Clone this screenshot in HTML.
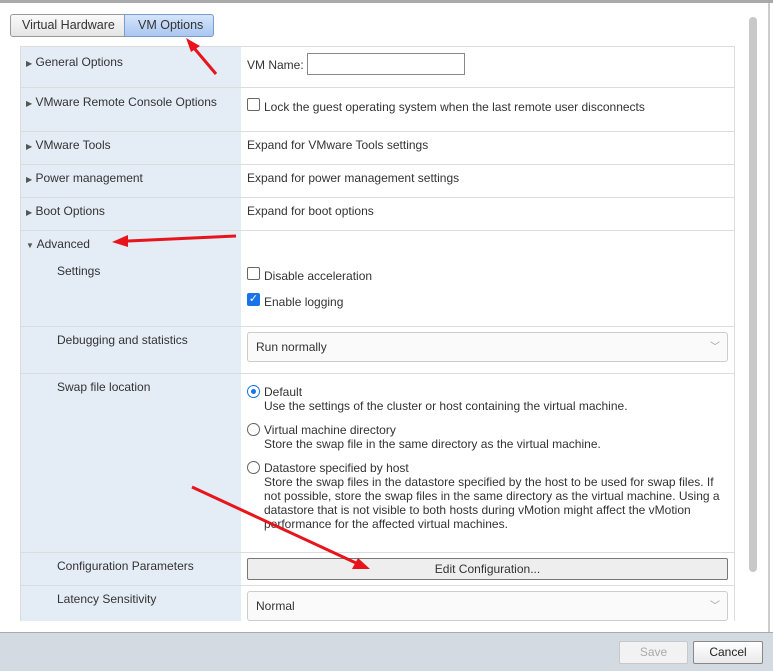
<!DOCTYPE html><html><head><style>
body{margin:0;width:773px;height:670px;position:relative;overflow:hidden;background:#fff;font-family:"Liberation Sans",sans-serif;font-size:12px;color:#333}
.a{position:absolute}
.t{position:absolute;white-space:nowrap}
.hl{position:absolute;left:20px;width:715px;height:1px;background:#dcdcdc}
.cb{position:absolute;width:11px;height:11px;border:1px solid #666;border-radius:2px;background:#fff}
.rd{position:absolute;width:11px;height:11px;border:1px solid #666;border-radius:50%;background:#fff}
.sel{position:absolute;left:247px;width:479px;height:28px;border:1px solid #ccc;border-radius:3px;background:#fafafa}
.tri{font-size:8px;color:#555}
</style></head><body>
<div class="a" style="left:0;top:0;width:773px;height:3px;background:#aaa"></div>
<div class="a" style="left:768px;top:3px;width:2px;height:630px;background:#ccc"></div>
<div class="a" style="left:749px;top:17px;width:8px;height:555px;background:#c8c8c8;border-radius:4px"></div>
<!-- tabs -->
<div class="a" style="left:10px;top:14px;width:114px;height:21px;border:1px solid #999;border-radius:3px 0 0 3px;background:linear-gradient(#fafafa,#e4e4e4)"></div>
<div class="t" style="left:22px;top:18px;font-size:12.5px">Virtual Hardware</div>
<div class="a" style="left:124px;top:14px;width:88px;height:21px;border:1px solid #7a9ccc;border-radius:0 3px 3px 0;background:linear-gradient(#d5e5fb,#a9c7f0)"></div>
<div class="t" style="left:138px;top:18px;font-size:12.5px">VM Options</div>
<!-- table -->
<div class="a" style="left:20px;top:46px;width:221px;height:575px;background:#e4ecf5"></div>
<div class="a" style="left:20px;top:46px;width:1px;height:575px;background:#ddd"></div>
<div class="a" style="left:734px;top:46px;width:1px;height:575px;background:#ddd"></div>
<div class="hl" style="top:46px"></div><div class="hl" style="top:87px"></div><div class="hl" style="top:131px"></div><div class="hl" style="top:164px"></div><div class="hl" style="top:197px"></div><div class="hl" style="top:230px"></div><div class="hl" style="top:326px;left:20px"></div><div class="hl" style="top:373px"></div><div class="hl" style="top:552px"></div><div class="hl" style="top:585px"></div>
<div class="t" style="left:26px;top:55px"><span class="tri">▶</span> General Options</div>
<div class="t" style="left:26px;top:95px"><span class="tri">▶</span> VMware Remote Console Options</div>
<div class="t" style="left:26px;top:138px"><span class="tri">▶</span> VMware Tools</div>
<div class="t" style="left:26px;top:171px"><span class="tri">▶</span> Power management</div>
<div class="t" style="left:26px;top:204px"><span class="tri">▶</span> Boot Options</div>
<div class="t" style="left:26px;top:237px"><span class="tri">▼</span> Advanced</div>
<div class="t" style="left:57px;top:264px">Settings</div>
<div class="t" style="left:57px;top:333px">Debugging and statistics</div>
<div class="t" style="left:57px;top:380px">Swap file location</div>
<div class="t" style="left:57px;top:559px">Configuration Parameters</div>
<div class="t" style="left:57px;top:592px">Latency Sensitivity</div>
<!-- right -->
<div class="t" style="left:247px;top:58px">VM Name:</div>
<div class="a" style="left:307px;top:53px;width:156px;height:20px;border:1px solid #888"></div>
<div class="cb" style="left:247px;top:98px"></div><div class="t" style="left:264px;top:100px">Lock the guest operating system when the last remote user disconnects</div>
<div class="t" style="left:247px;top:138px">Expand for VMware Tools settings</div>
<div class="t" style="left:247px;top:171px">Expand for power management settings</div>
<div class="t" style="left:247px;top:204px">Expand for boot options</div>
<div class="cb" style="left:247px;top:267px"></div><div class="t" style="left:264px;top:269px">Disable acceleration</div>
<div class="a" style="left:247px;top:293px;width:13px;height:13px;background:#1a73e8;border-radius:2px;color:#fff;font-size:11px;line-height:13px;text-align:center">✓</div><div class="t" style="left:264px;top:295px">Enable logging</div>
<div class="sel" style="top:332px"></div><div class="t" style="left:256px;top:340px">Run normally</div><div class="t" style="left:710px;top:338px;color:#999;font-size:10px">﹀</div>
<div class="rd" style="left:247px;top:385px;border-color:#1a73e8"></div><div class="a" style="left:251px;top:389px;width:5px;height:5px;border-radius:50%;background:#1a73e8"></div>
<div class="t" style="left:264px;top:385px">Default</div>
<div class="t" style="left:264px;top:399px">Use the settings of the cluster or host containing the virtual machine.</div>
<div class="rd" style="left:247px;top:423px"></div>
<div class="t" style="left:264px;top:423px">Virtual machine directory</div>
<div class="t" style="left:264px;top:437px">Store the swap file in the same directory as the virtual machine.</div>
<div class="rd" style="left:247px;top:461px"></div>
<div class="t" style="left:264px;top:461px">Datastore specified by host</div>
<div class="a" style="left:264px;top:475px;width:465px;line-height:14px">Store the swap files in the datastore specified by the host to be used for swap files. If not possible, store the swap files in the same directory as the virtual machine. Using a datastore that is not visible to both hosts during vMotion might affect the vMotion performance for the affected virtual machines.</div>
<div class="a" style="left:247px;top:558px;width:479px;height:20px;border:1px solid #777;border-radius:2px;background:#eee"></div><div class="t" style="left:247px;top:562px;width:481px;text-align:center">Edit Configuration...</div>
<div class="sel" style="top:591px"></div><div class="t" style="left:256px;top:599px">Normal</div><div class="t" style="left:710px;top:597px;color:#999;font-size:10px">﹀</div>
<!-- footer -->
<div class="a" style="left:0;top:632px;width:773px;height:38px;background:#d3dae2;border-top:1px solid #aaa"></div>
<div class="a" style="left:619px;top:641px;width:67px;height:21px;border:1px solid #c8c8c8;border-radius:2px;background:#f2f2f2"></div><div class="t" style="left:619px;top:645px;width:69px;text-align:center;color:#aaa">Save</div>
<div class="a" style="left:693px;top:641px;width:68px;height:21px;border:1px solid #888;border-radius:2px;background:linear-gradient(#fff,#eaeaea)"></div><div class="t" style="left:693px;top:645px;width:70px;text-align:center;color:#222">Cancel</div>
<!-- arrows -->
<svg class="a" style="left:0;top:0" width="773" height="670"><g stroke="#e8141b" stroke-width="3" fill="#e8141b">
<line x1="216" y1="74" x2="194" y2="48"/><polygon points="186,38 200,46 191,52" stroke="none"/>
<line x1="236" y1="236" x2="128" y2="241"/><polygon points="112,242 128,235 128,247" stroke="none"/>
<line x1="192" y1="487" x2="356" y2="563"/><polygon points="370,569 352,569 358,558" stroke="none"/>
</g></svg>
</body></html>
